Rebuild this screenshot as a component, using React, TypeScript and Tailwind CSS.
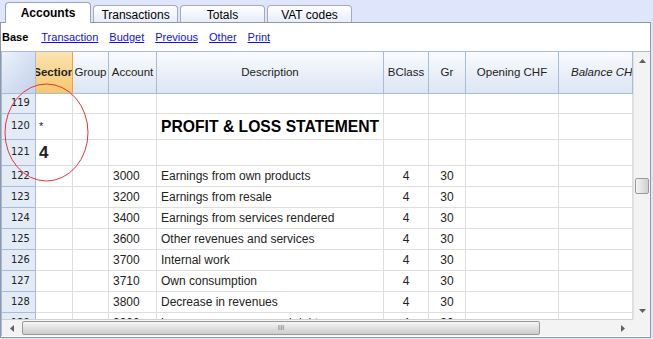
import React from "react";

type Row = {
    n: number;
    section?: string;
    account?: string;
    desc?: string;
    bclass?: string;
    gr?: string;
    h: number;
    kind?: "title" | "star" | "big";
};

const COLS = [
    { key: "section", label: "Section", w: "w-[37px]" },
    { key: "group", label: "Group", w: "w-[36px]" },
    { key: "account", label: "Account", w: "w-[48px]" },
    { key: "desc", label: "Description", w: "w-[227px]" },
    { key: "bclass", label: "BClass", w: "w-[45px]" },
    { key: "gr", label: "Gr", w: "w-[37px]" },
    { key: "opening", label: "Opening CHF", w: "w-[93px]" },
    { key: "balance", label: "Balance CHF", w: "w-[74px]" },
];

const ROWS: Row[] = [
    { n: 119, h: 20 },
    { n: 120, section: "*", desc: "PROFIT & LOSS STATEMENT", h: 26, kind: "title" },
    { n: 121, section: "4", h: 26, kind: "big" },
    { n: 122, account: "3000", desc: "Earnings from own products", bclass: "4", gr: "30", h: 21 },
    { n: 123, account: "3200", desc: "Earnings from resale", bclass: "4", gr: "30", h: 21 },
    { n: 124, account: "3400", desc: "Earnings from services rendered", bclass: "4", gr: "30", h: 21 },
    { n: 125, account: "3600", desc: "Other revenues and services", bclass: "4", gr: "30", h: 21 },
    { n: 126, account: "3700", desc: "Internal work", bclass: "4", gr: "30", h: 21 },
    { n: 127, account: "3710", desc: "Own consumption", bclass: "4", gr: "30", h: 21 },
    { n: 128, account: "3800", desc: "Decrease in revenues", bclass: "4", gr: "30", h: 21 },
    { n: 129, account: "3900", desc: "Losses on revenues and debtors", bclass: "4", gr: "30", h: 21 },
];

const TABS = ["Accounts", "Transactions", "Totals", "VAT codes"];
const LINKS = ["Transaction", "Budget", "Previous", "Other", "Print"];

function Tabs() {
    return (
        <div className="flex h-[22px] items-end pl-[5px] gap-[2px]">
            {TABS.map((t, i) =>
                i === 0 ? (
                    <div
                        key={t}
                        className="relative z-10 -mb-px flex h-[21px] w-[86px] items-center justify-center rounded-t-[4px] border border-b-0 border-[#9aa3b5] bg-white text-[12px] font-bold text-black"
                    >
                        {t}
                    </div>
                ) : (
                    <div
                        key={t}
                        className="flex h-[17px] w-[85px] items-center justify-center rounded-t-[4px] border border-b-0 border-[#a2abbd] bg-gradient-to-b from-white to-[#e6ecf9] pt-[2px] text-[12px] text-black"
                    >
                        {t}
                    </div>
                )
            )}
        </div>
    );
}

function HeaderRow() {
    return (
        <div className="flex h-[42px] shrink-0 border-b border-[#a9bcd5]">
            <div className="h-full w-[34px] shrink-0 border-r border-[#a9bcd5] bg-gradient-to-br from-[#edf2fb] via-[#d7e1f3] to-[#c4d1e8]" />
            {COLS.map((c) =>
                c.key === "section" ? (
                    <div
                        key={c.key}
                        className={`${c.w} flex h-full shrink-0 items-center justify-center overflow-hidden whitespace-nowrap border-r border-[#f0a23a] bg-gradient-to-b from-[#fbe3b0] to-[#f6c76d] text-[11.5px] font-bold text-[#222]`}
                    >
                        {c.label}
                    </div>
                ) : (
                    <div
                        key={c.key}
                        className={`${c.w} flex h-full shrink-0 items-center overflow-hidden whitespace-nowrap border-r border-[#a9bcd5] bg-gradient-to-b from-[#f9fbfe] to-[#dce5f3] text-[11.5px] text-[#222] ${c.key === "balance" ? "justify-start pl-[12px] italic" : "justify-center"}`}
                    >
                        {c.label}
                    </div>
                )
            )}
        </div>
    );
}

function DataRow({ r }: { r: Row }) {
    const cell = "flex h-full shrink-0 items-center overflow-hidden whitespace-nowrap border-r border-[#dedede]";
    return (
        <div className="flex shrink-0" style={{ height: r.h }}>
            <div className="flex h-full w-[34px] shrink-0 items-center border-b border-r border-[#a9bcd5] bg-[#e3ebf6] pl-[9px] font-['DejaVu_Sans_Condensed','DejaVu_Sans',sans-serif] text-[11px] text-[#222]">
                {r.n}
            </div>
            <div className="flex h-full border-b border-[#dedede]">
                <div className={`${cell} w-[37px] pl-[3px] text-[#222] ${r.kind === "big" ? "text-[17px] font-bold" : "text-[11px]"}`}>
                    {r.section}
                </div>
                <div className={`${cell} w-[36px]`} />
                <div className={`${cell} w-[48px] pl-[4px] text-[12px] text-[#222]`}>{r.account}</div>
                <div
                    className={`${cell} w-[227px] pl-[4px] text-[#222] ${r.kind === "title" ? "text-[15.7px] font-bold text-black" : "text-[12px]"}`}
                >
                    {r.desc}
                </div>
                <div className={`${cell} w-[45px] justify-center text-[12px] text-[#222]`}>{r.bclass}</div>
                <div className={`${cell} w-[37px] justify-center text-[12px] text-[#222]`}>{r.gr}</div>
                <div className={`${cell} w-[93px]`} />
                <div className={`${cell} w-[74px]`} />
            </div>
        </div>
    );
}

function VScroll() {
    return (
        <div className="flex h-full w-[17px] shrink-0 flex-col border-l border-[#e2e2e2] bg-[#f3f3f3]">
            <div className="flex h-[17px] items-center justify-center">
                <svg width="7" height="4" viewBox="0 0 7 4">
                    <path d="M3.5 0 L7 4 L0 4 Z" fill="#606060" />
                </svg>
            </div>
            <div className="h-[109px]" />
            <div className="mx-[1px] h-[16px] rounded-[2px] border border-[#9a9a9a] bg-gradient-to-r from-[#f4f4f4] via-[#e2e2e2] to-[#cfcfcf]" />
            <div className="flex-1" />
            <div className="flex h-[17px] items-center justify-center">
                <svg width="7" height="4" viewBox="0 0 7 4">
                    <path d="M0 0 L7 0 L3.5 4 Z" fill="#606060" />
                </svg>
            </div>
        </div>
    );
}

function HScroll() {
    return (
        <div className="flex h-[17px] shrink-0">
            <div className="flex h-full w-[631px] items-center border-t border-[#cfcfcf] bg-[#f3f3f3]">
                <div className="flex h-full w-[20px] items-center justify-center">
                    <svg width="4" height="7" viewBox="0 0 4 7">
                        <path d="M0 3.5 L4 0 L4 7 Z" fill="#606060" />
                    </svg>
                </div>
                <div className="flex h-[14px] w-[518px] items-center justify-center rounded-[2px] border border-[#9a9a9a] bg-gradient-to-b from-[#f6f6f6] via-[#e0e0e0] to-[#cbcbcb]">
                    <span className="text-[8px] leading-none text-[#777]">III</span>
                </div>
                <div className="flex-1" />
                <div className="flex h-full w-[20px] items-center justify-center">
                    <svg width="4" height="7" viewBox="0 0 4 7">
                        <path d="M0 0 L4 3.5 L0 7 Z" fill="#606060" />
                    </svg>
                </div>
            </div>
            <div className="h-full w-[17px] bg-[#f3f3f3]" />
        </div>
    );
}

export default function App() {
    return (
        <div className="relative h-[339px] w-[653px] overflow-hidden bg-[#dfe6fb] font-['Liberation_Sans','Noto_Sans',sans-serif]">
            <Tabs />
            <div className="flex h-[316px] w-[651px] flex-col border border-[#9098a8] bg-white">
                <div className="flex h-[28px] shrink-0 items-center gap-[11px] pl-[1px] pt-[1px] text-[11px]">
                    <span className="mr-[2px] font-bold text-black">Base</span>
                    {LINKS.map((l) => (
                        <span key={l} className="text-[#1010ee] underline">
                            {l}
                        </span>
                    ))}
                </div>
                <div className="flex flex-col border-l border-t border-[#a9bcd5]">
                    <div className="flex h-[267px]">
                        <div className="flex h-full w-[631px] flex-col overflow-hidden">
                            <HeaderRow />
                            {ROWS.map((r) => (
                                <DataRow key={r.n} r={r} />
                            ))}
                        </div>
                        <VScroll />
                    </div>
                    <HScroll />
                </div>
            </div>
            <svg className="pointer-events-none absolute left-0 top-0" width="653" height="339">
                <ellipse cx="46.5" cy="132.5" rx="41.5" ry="48.5" fill="none" stroke="#e3343f" strokeWidth="1" />
            </svg>
        </div>
    );
}
